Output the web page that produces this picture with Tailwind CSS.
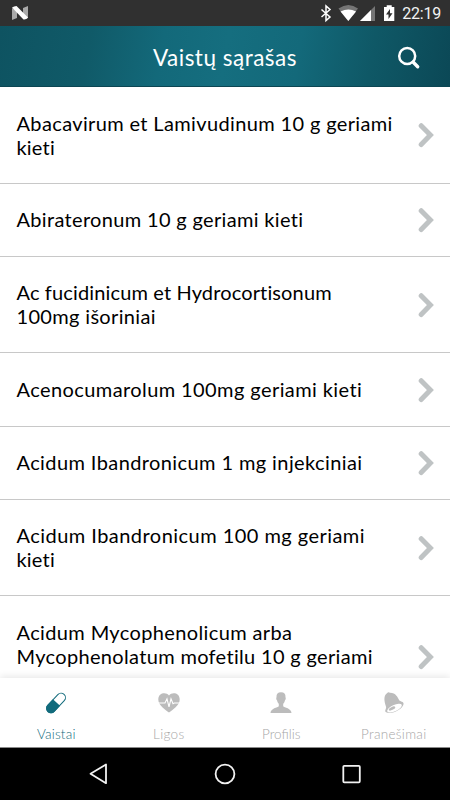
<!DOCTYPE html>
<html lang="lt">
<head>
<meta charset="utf-8">
<title>Vaistų sąrašas</title>
<script src="https://cdn.jsdelivr.net/npm/@tailwindcss/browser@4"></script>
</head>
<body class="bg-black">
<svg class="hidden"><symbol id="chev" viewBox="0 0 16 26"><path d="M3.200 3.700 12.400 13.100 3.200 22.500" fill="none" stroke="#bfc3c4" stroke-width="5" stroke-linecap="round" stroke-linejoin="miter"/></symbol></svg>
<div class="flex h-[800px] w-[450px] flex-col overflow-hidden bg-white font-['Lato',sans-serif] text-black">
  <div class="flex h-[26px] shrink-0 items-center justify-between bg-[#303030] text-white">
    <svg class="ml-3 h-[14px] w-[17px]" viewBox="0 0 17 14"><path d="M0 2 5 5v7L0 14zM11 2l5-2v12l-3 1-2-4z" fill="#aaa"/><path d="M0 1.500Q2 0 4.500 0L16 11.500Q14 14 11.500 13.500z" fill="#fff"/></svg>
    <svg class="mr-[5px] ml-auto h-[26px] w-[80px] shrink-0" viewBox="317 0 80 26">
      <path d="M321.500 9.500 330 17l-4 3.500V6l4 3.500-8.500 7.500" fill="none" stroke="#fff" stroke-width="1.500"/>
      <path d="M338.500 8.500q10-7 19.500 0L348.300 21z" fill="#757575"/><path d="M340.500 11.600q8-4.300 15.600 0L348.300 21z" fill="#fff"/>
      <path d="M375 6v15h-15z" fill="#757575"/><path d="M371 10v11h-11z" fill="#fff"/>
      <path d="M384 7h2.700V5.200h5V7h2.600v14H384z" fill="#fff"/><path d="M390 9l-4 5.500h2.500V19l4-5.700H390z" fill="#303030"/>
    </svg>
    <span class="mr-[9px] w-[39px] whitespace-nowrap text-right font-[Roboto] text-[16px] leading-[26px] tracking-[-0.200px] text-[#f3f3f3]"><span class="relative top-px">22:19</span></span>
  </div>
  <header class="grid h-[61px] shrink-0 grid-cols-[60px_1fr_60px] items-center border-b border-[#0c4653] bg-[linear-gradient(100deg,#0e5361_0%,#105a68_20%,#13697a_36%,#156e7f_50%,#13697a_66%,#0f5866_82%,#0b4856_100%)] text-white">
    <h1 class="col-start-2 pt-[3px] text-center text-[22.500px] leading-[58px] tracking-[0.500px]">Vaistų sąrašas</h1>
    <svg class="mt-[2px] ml-[7px] h-[24px] w-[24px]" viewBox="0 0 24 24" fill="none" stroke="#fff" stroke-linecap="round"><circle cx="10.200" cy="10" r="8" stroke-width="2.500"/><path d="M16.300 16.300 20.700 20.700" stroke-width="3.400"/></svg>
  </header>
  <main class="min-h-0 flex-1 overflow-hidden text-[20px] leading-6">
    <div class="flex h-[97px] items-center border-b border-[#c8c8c8] pl-[16.500px] pr-4"><p class="flex-1 whitespace-nowrap"><span class="tracking-[0.360px]">Abacavirum et Lamivudinum 10 g geriami</span><br><span class="tracking-[0.200px]">kieti</span></p><svg class="h-[26px] w-4"><use href="#chev"/></svg></div>
    <div class="flex h-[73px] items-center border-b border-[#c8c8c8] pl-[16.500px] pr-4"><p class="flex-1 whitespace-nowrap pb-[2px] tracking-[0.330px]">Abirateronum 10 g geriami kieti</p><svg class="h-[26px] w-4"><use href="#chev"/></svg></div>
    <div class="flex h-[96px] items-center border-b border-[#c8c8c8] pl-[16.500px] pr-4"><p class="flex-1 whitespace-nowrap pb-px"><span class="tracking-[0.140px]">Ac fucidinicum et Hydrocortisonum</span><br><span class="tracking-[0.330px]">100mg išoriniai</span></p><svg class="h-[26px] w-4"><use href="#chev"/></svg></div>
    <div class="flex h-[74px] items-center border-b border-[#c8c8c8] pl-[16.500px] pr-4"><p class="flex-1 whitespace-nowrap pb-[2px] tracking-[0.410px]">Acenocumarolum 100mg geriami kieti</p><svg class="h-[26px] w-4"><use href="#chev"/></svg></div>
    <div class="flex h-[73px] items-center border-b border-[#c8c8c8] pl-[16.500px] pr-4"><p class="flex-1 whitespace-nowrap pb-[2px] tracking-[0.400px]">Acidum Ibandronicum 1 mg injekciniai</p><svg class="h-[26px] w-4"><use href="#chev"/></svg></div>
    <div class="flex h-[96px] items-center border-b border-[#c8c8c8] pl-[16.500px] pr-4"><p class="flex-1 whitespace-nowrap pb-px"><span class="tracking-[0.460px]">Acidum Ibandronicum 100 mg geriami</span><br><span class="tracking-[0.200px]">kieti</span></p><svg class="h-[26px] w-4"><use href="#chev"/></svg></div>
    <div class="flex h-[121px] items-center pl-[16.500px] pr-4"><p class="mb-[2px] h-[72px] flex-1 whitespace-nowrap"><span class="tracking-[0.370px]">Acidum Mycophenolicum arba</span><br><span class="tracking-[0.330px]">Mycophenolatum mofetilu 10 g geriami</span></p><svg class="h-[26px] w-4"><use href="#chev"/></svg></div>
  </main>
  <nav class="relative grid h-[70px] shrink-0 grid-cols-4 border-b border-[#8a8a8a] bg-white text-[13.500px] font-light leading-5 text-[#a6a6a6] shadow-[0_-2px_7px_rgba(0,0,0,0.09)]">
    <div class="flex flex-col items-center pt-[13px] text-[#126b7c]"><svg class="h-6 w-6" viewBox="0 0 24 24"><g transform="rotate(43 12 12)"><rect x="7.600" y="0.200" width="8.800" height="23.600" rx="4.400" fill="#fff" stroke="#126b7c" stroke-width="1"/><path d="M7.100 11.300h9.800v8.100a4.900 4.900 0 0 1-9.800 0z" fill="#126b7c"/></g></svg><span class="mt-[9px] tracking-[0.200px]">Vaistai</span></div>
    <div class="flex flex-col items-center pt-[13px]"><svg class="h-6 w-6" viewBox="0 0 24 24"><path d="M12 21.500C8.500 19 1.300 14.500 1.300 8.500 1.300 1.800 9 .8 12 4.500c3-3.700 10.700-2.700 10.700 4 0 6-7.200 10.500-10.700 13z" fill="#bcbcbc"/><path d="M1 12h7l2-4.200 2 8 2-8 2 5 1.300-.8H23" fill="none" stroke="#fff" stroke-width="1.100"/></svg><span class="mt-[9px] tracking-[0.300px]">Ligos</span></div>
    <div class="flex flex-col items-center pt-[13px]"><svg class="h-6 w-6" viewBox="0 0 24 24"><path d="M12 1.300c3.200 0 4.700 1.800 4.500 5 .5 1 .3 2.500-.6 3.100-.2 1.600-1 2.600-1.700 3.400v2.400c1 1.500 8.300 1.900 8.300 6.800h-21c0-4.900 7.300-5.300 8.300-6.800v-2.400c-.7-.8-1.500-1.800-1.700-3.400-.9-.6-1.100-2.100-.6-3.100-.2-3.200 1.300-5 4.500-5z" fill="#bcbcbc"/></svg><span class="mt-[9px] tracking-[0]">Profilis</span></div>
    <div class="flex flex-col items-center pt-[13px]"><svg class="h-6 w-6" viewBox="0 0 24 24"><path d="M5 2.300Q6.300.500 8 1.800c6 0 7.500 4.500 9.200 7.500 1.200 1.500 4.600 1.300 4.400 3.700-.8 5-11.800 11-17.500 8.300-2-1.300.2-3 0-5.300C2 9.500 1.500 5 5 2.300z" fill="#bcbcbc"/><ellipse cx="12.500" cy="17.100" rx="8" ry="3.200" transform="rotate(-25 12.500 17.100)" fill="#fff"/><ellipse cx="10" cy="17.500" rx="3.500" ry="1.500" transform="rotate(-25 10 17.500)" fill="#bcbcbc"/></svg><span class="mt-[9px] tracking-[0.300px]">Pranešimai</span></div>
  </nav>
  <div class="grid h-[52px] shrink-0 grid-cols-[161px_128px_161px] bg-black">
    <svg class="h-[52px] w-[161px]" viewBox="0 0 161 52"><path d="M106 16.500v18.700L90.500 25.800z" fill="none" stroke="#f2f2f2" stroke-width="1.800" stroke-linejoin="round"/></svg>
    <svg class="h-[52px] w-[128px]" viewBox="0 0 128 52"><circle cx="64" cy="26" r="9.400" fill="none" stroke="#f2f2f2" stroke-width="1.800"/></svg>
    <svg class="h-[52px] w-[161px]" viewBox="0 0 161 52"><rect x="54.300" y="17.800" width="16.500" height="16.500" rx="1" fill="none" stroke="#f2f2f2" stroke-width="1.800"/></svg>
  </div>
</div>
</body>
</html>
